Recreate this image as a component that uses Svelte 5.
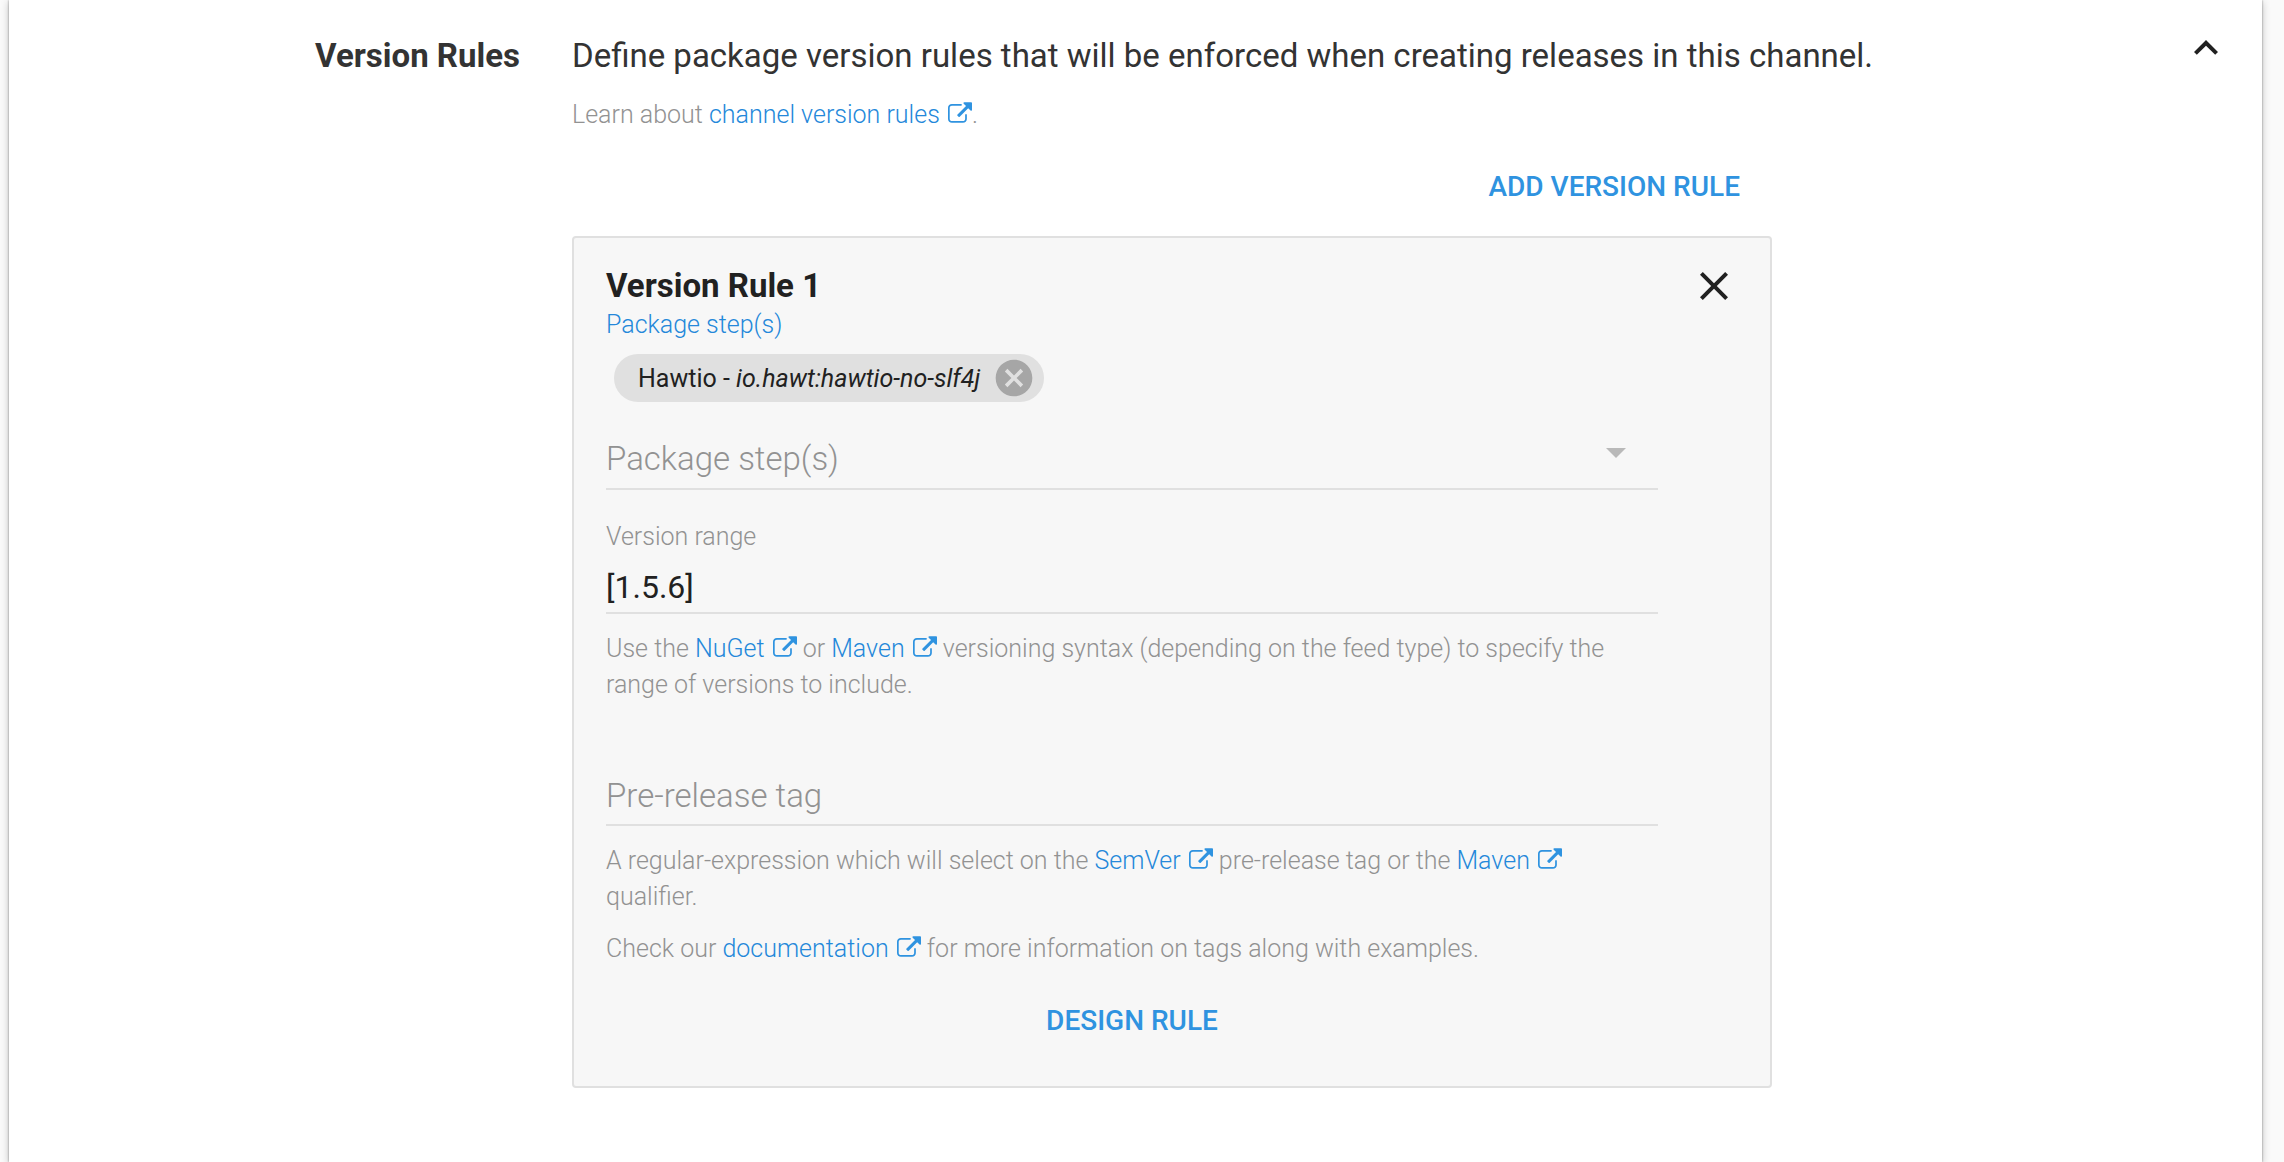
<script>
    let open = $state(true)
    let steps = $state([{ name: 'Hawtio', pkg: 'io.hawt:hawtio-no-slf4j' }])
    let step = $state('')
    let range = $state('[1.5.6]')
    let tag = $state('')

    const removeStep = (item) => {
        steps = steps.filter((s) => s.pkg !== item.pkg)
    }
</script>

{#snippet external(text)}
    <a href="#top">{text} <svg class="external" viewBox="0 0 1792 1536" aria-hidden="true"><path d="M1408 928v320q0 119-84.5 203.5t-203.5 84.5h-832q-119 0-203.5-84.5t-84.5-203.5v-832q0-119 84.5-203.5t203.5-84.5h704q14 0 23 9t9 23v64q0 14-9 23t-23 9h-704q-66 0-113 47t-47 113v832q0 66 47 113t113 47h832q66 0 113-47t47-113v-320q0-14 9-23t23-9h64q14 0 23 9t9 23zm384-864v512q0 26-19 45t-45 19-45-19l-176-176-652 652q-10 10-23 10t-23-10l-114-114q-10-10-10-23t10-23l652-652-176-176q-19-19-19-45t19-45 45-19h512q26 0 45 19t19 45z" /></svg></a>
{/snippet}

<main class="panel">
    <h2 class="section-title">Version Rules</h2>

    <div class="section-body">
        <p class="summary">Define package version rules that will be enforced when creating releases in this channel.</p>
        {#if open}
            <p class="help learn">Learn about {@render external('channel version rules')}.</p>

            <div class="rules">
                <div class="actions">
                    <button class="flat-button">ADD VERSION RULE</button>
                </div>

                <section class="card">
                    <div class="card-body">
                        <h3>Version Rule 1</h3>
                        <label class="label active" for="steps">Package step(s)</label>
                        <div class="chips">
                            {#each steps as item}
                                <div class="chip">
                                    <span>{item.name} - <em>{item.pkg}</em></span>
                                    <button class="icon-button" aria-label="Remove {item.name}" onclick={() => removeStep(item)}>
                                        <svg class="cancel" viewBox="0 0 24 24"><path d="M12 2C6.47 2 2 6.47 2 12s4.47 10 10 10 10-4.47 10-10S17.53 2 12 2zm5 13.59L15.59 17 12 13.41 8.41 17 7 15.59 10.59 12 7 8.41 8.41 7 12 10.59 15.59 7 17 8.41 13.41 12 17 15.59z" /></svg>
                                    </button>
                                </div>
                            {/each}
                        </div>
                        <div class="select-wrap">
                            <select id="steps" class="field" bind:value={step}>
                                <option value="">Package step(s)</option>
                            </select>
                            <svg class="arrow" viewBox="0 0 20 10" aria-hidden="true"><path d="M0 0l10 10 10-10z" /></svg>
                        </div>

                        <label class="label range-label" for="range">Version range</label>
                        <input id="range" class="field range" type="text" bind:value={range} />
                        <p class="help">
                            Use the {@render external('NuGet')} or {@render external('Maven')} versioning syntax (depending on the feed type) to specify the range of versions to include.
                        </p>

                        <input class="field tag" type="text" placeholder="Pre-release tag" aria-label="Pre-release tag" bind:value={tag} />
                        <p class="help">
                            A regular-expression which will select on the {@render external('SemVer')} pre-release tag or the {@render external('Maven')} qualifier.
                        </p>
                        <p class="help">
                            Check our {@render external('documentation')} for more information on tags along with examples.
                        </p>

                        <div class="design">
                            <button class="flat-button">DESIGN RULE</button>
                        </div>
                    </div>

                    <button class="icon-button" aria-label="Remove rule">
                        <svg viewBox="0 0 24 24"><path d="M19 6.41L17.59 5 12 10.59 6.41 5 5 6.41 10.59 12 5 17.59 6.41 19 12 13.41 17.59 19 19 17.59 13.41 12z" /></svg>
                    </button>
                </section>
            </div>
        {/if}
    </div>

    <button class="icon-button toggle" aria-label="Toggle section" aria-expanded={open} onclick={() => (open = !open)}>
        <svg viewBox="0 0 24 24"><path d="M12 8l-6 6 1.41 1.41L12 10.83l4.59 4.58L18 14z" /></svg>
    </button>
</main>

<style>
:global(body) {
    margin: 0;
    background: #fafafa;
    font-family: Roboto, "Liberation Sans", sans-serif;
}

.panel {
    display: grid;
    grid-template-columns: 511px minmax(0, 1fr) auto;
    column-gap: 52px;
    align-items: start;
    box-sizing: border-box;
    min-height: 100vh;
    margin: 0 22px 0 9px;
    padding: 36px 32px 36px 0;
    background: #fff;
    box-shadow: 0 2px 8px rgba(0, 0, 0, 0.24), 0 0 2px rgba(0, 0, 0, 0.4);
}

h2, h3, p {
    margin: 0;
}

.section-title, h3, .summary {
    font-size: 33px;
    line-height: 40px;
}

.section-title {
    color: #333;
    text-align: right;
}

.summary {
    color: #333;
}

.help, .label {
    font-size: 25px;
    font-weight: 300;
    line-height: 36px;
    color: #929292;
}

.help {
    margin-top: 17px;
}

.help + .help {
    margin-top: 16px;
}

.summary + .learn {
    margin-top: 21px;
}

a, .label.active {
    color: #2488da;
}

a {
    text-decoration: none;
}

.external {
    width: 24px;
    height: 21px;
    margin-left: 2px;
    fill: #2f93e0;
}

.rules {
    max-width: 1200px;
}

.actions {
    display: flex;
    justify-content: flex-end;
    margin-top: 18px;
    padding-right: 32px;
}

.flat-button {
    padding: 0;
    border: 0;
    background: none;
    color: #2f93e0;
    font-family: inherit;
    font-size: 28px;
    font-weight: 500;
    line-height: 72px;
    cursor: pointer;
}

.card {
    display: flex;
    align-items: flex-start;
    gap: 32px;
    margin-top: 13px;
    padding: 24px 32px 29px;
    border: 2px solid #e0e0e0;
    border-radius: 4px;
    background: #f7f7f7;
}

.card-body {
    flex: 1;
    min-width: 0;
    padding-top: 4px;
}

h3 {
    color: #212121;
}

.label {
    display: block;
}

.label.active {
    margin-top: 1px;
}

.chips {
    display: flex;
    margin: 11px 8px 0;
    min-height: 48px;
}

.chip {
    display: flex;
    align-items: center;
    gap: 12px;
    height: 48px;
    padding: 0 8px 0 24px;
    border-radius: 24px;
    background: #e0e0e0;
    color: #212121;
    font-size: 25px;
}

.icon-button {
    display: block;
    padding: 0;
    border: 0;
    background: none;
    cursor: pointer;
}

.icon-button svg {
    display: block;
    width: 48px;
    height: 48px;
    fill: #212121;
}

.icon-button .cancel {
    width: 44px;
    height: 44px;
    fill: #a6a6a6;
}

.toggle {
    margin-top: -12px;
}

.field {
    display: block;
    box-sizing: border-box;
    width: 100%;
    height: 60px;
    padding: 0 0 2px;
    border: 0;
    border-bottom: 2px solid #e0e0e0;
    border-radius: 0;
    outline: none;
    background: none;
    color: #212121;
    font-family: inherit;
    font-size: 33px;
}

.field.range {
    height: 59px;
    padding: 6px 0 0;
    font-size: 32px;
}

.select-wrap {
    display: grid;
    align-items: center;
    margin-top: 28px;
}

.select-wrap > * {
    grid-area: 1 / 1;
}

.select-wrap .field {
    appearance: none;
    color: #929292;
    font-weight: 300;
}

.arrow {
    justify-self: end;
    width: 20px;
    height: 10px;
    margin: 0 32px 14px 0;
    fill: #b9b9b9;
    pointer-events: none;
}

.range-label {
    margin-top: 29px;
}

.field.tag {
    margin-top: 63px;
    padding: 0;
}

.field::placeholder {
    color: #929292;
    font-weight: 300;
    opacity: 1;
}

.design {
    display: flex;
    justify-content: center;
    margin-top: 18px;
}
</style>
